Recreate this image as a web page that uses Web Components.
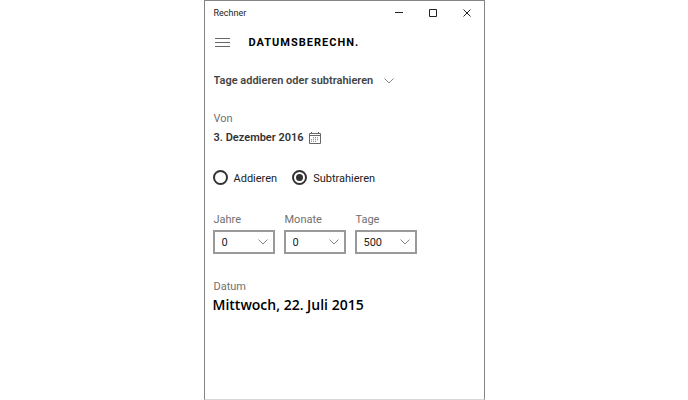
<!DOCTYPE html>
<html lang="de">
<head>
<meta charset="utf-8">
<meta name="viewport" content="width=device-width, initial-scale=1">
<title>Rechner</title>
<style>
    body{
        margin: 0;
        background-color: #fff;
        color: #2b2b2b;
        font: 11px/16px Roboto, "Open Sans", sans-serif;
    }
</style>
</head>
<body>
<app-window caption="Rechner">
    <nav-header>Datumsberechn.</nav-header>
    <mode-select></mode-select>
    <date-field label="Von">3. Dezember 2016</date-field>
    <operation-picker></operation-picker>
    <offset-row>
        <number-select label="Jahre" value="0"></number-select>
        <number-select label="Monate" value="0"></number-select>
        <number-select label="Tage" value="500"></number-select>
    </offset-row>
    <date-result label="Datum">Mittwoch, 22. Juli 2015</date-result>
</app-window>

<script>
const chevron = `
    <svg width="10" height="6" viewBox="0 0 10 6" fill="none" stroke="#888" aria-hidden="true">
        <path d="M.5.5 5 5 9.5.5"/>
    </svg>`;

class AppWindow extends HTMLElement {
    constructor(){
        super();
        this.attachShadow({mode:'open'});
    }

    connectedCallback(){
        this.shadowRoot.innerHTML=`
            <style>
                :host{
                    display: flex;
                    flex-direction: column;
                    box-sizing: border-box;
                    max-width: 281px;
                    min-height: 100vh;
                    margin: 0 auto;
                    border: 1px solid #858585;
                    border-bottom-color: #d8d8d8;
                    background-color: #fff;
                }

                header{
                    display: flex;
                    align-items: center;
                    height: 23px;
                    padding-left: 9px;
                    color: #222;
                    font-size: 9px;
                }

                .caption{
                    flex: 1;
                }

                button{
                    display: grid;
                    place-items: center;
                    width: 34px;
                    height: 23px;
                    padding: 0;
                    border: 0;
                    background: none;
                }

                main{
                    padding: 9px 8px;
                }
            </style>
            <header>
                <span class="caption">${this.getAttribute('caption')}</span>
                <button type="button" aria-label="Minimieren">
                    <svg width="8" height="8" fill="none" stroke="#222"><path d="M0 3.5h8"/></svg>
                </button>
                <button type="button" aria-label="Maximieren">
                    <svg width="8" height="8" fill="none" stroke="#222"><path d="M.5.5h7v7h-7z"/></svg>
                </button>
                <button type="button" aria-label="Schließen">
                    <svg width="8" height="8" fill="none" stroke="#222"><path d="m.5.5 7 7m0-7-7 7"/></svg>
                </button>
            </header>
            <main><slot></slot></main>`
        ;
    }
}

class NavHeader extends HTMLElement {
    constructor(){
        super();
        this.attachShadow({mode:'open'});

        this.shadowRoot.innerHTML=`
            <style>
                :host{
                    display: flex;
                    align-items: center;
                    gap: 18px;
                    margin-bottom: 20px;
                }

                button{
                    display: flex;
                    padding: 0 1px 0 2px;
                    border: 0;
                    background: none;
                }

                h1{
                    margin: 0;
                    color: #000;
                    font-size: 11px;
                    line-height: 20px;
                    font-weight: 700;
                    letter-spacing: 1px;
                    text-transform: uppercase;
                }
            </style>
            <button type="button" aria-label="Navigation öffnen">
                <svg width="15" height="10" fill="none" stroke="#666"><path d="M0 .5h15M0 4.5h15M0 8.5h15"/></svg>
            </button>
            <h1><slot></slot></h1>`
        ;
    }
}

class ModeSelect extends HTMLElement {
    constructor(){
        super();
        this.attachShadow({mode:'open'});

        this.shadowRoot.innerHTML=`
            <style>
                :host{
                    display: flex;
                    margin-bottom: 22px;
                    padding-left: 1px;
                }

                .box{
                    display: grid;
                    align-items: center;
                }

                select, svg{
                    grid-area: 1 / 1;
                }

                select{
                    appearance: none;
                    height: 16px;
                    margin: 0;
                    padding: 0 20px 0 0;
                    border: 0;
                    background: none;
                    color: #444;
                    font: inherit;
                    font-weight: 600;
                }

                svg{
                    justify-self: end;
                    pointer-events: none;
                }
            </style>
            <div class="box">
                <select aria-label="Berechnungsmodus">
                    <option>Tage addieren oder subtrahieren</option>
                </select>
                ${chevron}
            </div>`
        ;
    }
}

class DateField extends HTMLElement {
    constructor(){
        super();
        this.attachShadow({mode:'open'});
    }

    connectedCallback(){
        this.shadowRoot.innerHTML=`
            <style>
                :host{
                    display: block;
                    margin-bottom: 24px;
                    padding-left: 1px;
                }

                label{
                    display: block;
                    margin-bottom: 3px;
                    color: #707070;
                }

                button{
                    display: flex;
                    align-items: center;
                    gap: 5px;
                    padding: 0;
                    border: 0;
                    background: none;
                    color: #333;
                    font: inherit;
                    font-weight: 600;
                }
            </style>
            <label for="date">${this.getAttribute('label')}</label>
            <button id="date" type="button">
                <slot></slot>
                <svg width="12" height="12" fill="none" stroke="#666" aria-hidden="true">
                    <path d="M.5 1.5h11v10H.5zM.5 3.5h11M2.5 0v2M9.5 0v2"/>
                    <path stroke="#999" d="M4.5 5v5M6.5 5v5M8.5 5v4M2.5 7v3"/>
                    <path stroke="#fff" d="M2 6.5h8M2 8.5h8" stroke-opacity=".6"/>
                </svg>
            </button>`
        ;
    }
}

class OperationPicker extends HTMLElement {
    constructor(){
        super();
        this.attachShadow({mode:'open'});

        this.shadowRoot.innerHTML=`
            <style>
                :host{
                    display: flex;
                    gap: 15px;
                    margin-bottom: 25px;
                    color: #222;
                }

                label{
                    display: flex;
                    align-items: flex-start;
                    gap: 6px;
                    line-height: 17px;
                }

                input{
                    appearance: none;
                    display: grid;
                    place-items: center;
                    box-sizing: border-box;
                    width: 15px;
                    height: 15px;
                    margin: 0;
                    border: 2px solid #333;
                    border-radius: 50%;
                }

                input:checked::before{
                    width: 7px;
                    height: 7px;
                    border-radius: 50%;
                    background-color: #333;
                    content: '';
                }
            </style>
            <label><input type="radio" name="operation" value="add">Addieren</label>
            <label><input type="radio" name="operation" value="subtract" checked>Subtrahieren</label>`
        ;
    }
}

class OffsetRow extends HTMLElement {
    constructor(){
        super();
        this.attachShadow({mode:'open'});

        this.shadowRoot.innerHTML=`
            <style>
                :host{
                    display: flex;
                    flex-wrap: wrap;
                    gap: 9px;
                    margin-bottom: 25px;
                }
            </style>
            <slot></slot>`
        ;
    }
}

class NumberSelect extends HTMLElement {
    constructor(){
        super();
        this.attachShadow({mode:'open'});
    }

    connectedCallback(){
        this.shadowRoot.innerHTML=`
            <style>
                :host{
                    display: block;
                    width: 62px;
                }

                label{
                    display: block;
                    margin-bottom: 2px;
                    padding-left: 1px;
                    color: #707070;
                }

                .box{
                    display: grid;
                    align-items: center;
                }

                select, svg{
                    grid-area: 1 / 1;
                }

                select{
                    appearance: none;
                    box-sizing: border-box;
                    width: 100%;
                    height: 24px;
                    margin: 0;
                    padding: 1px 18px 0 7px;
                    border: 2px solid #999;
                    border-radius: 0;
                    background-color: #fff;
                    color: #222;
                    font: inherit;
                }

                svg{
                    justify-self: end;
                    margin-right: 7px;
                    pointer-events: none;
                }
            </style>
            <label for="number">${this.getAttribute('label')}</label>
            <div class="box">
                <select id="number"><option>${this.getAttribute('value')}</option></select>
                ${chevron}
            </div>`
        ;
    }
}

class DateResult extends HTMLElement {
    constructor(){
        super();
        this.attachShadow({mode:'open'});
    }

    connectedCallback(){
        this.shadowRoot.innerHTML=`
            <style>
                :host{
                    display: block;
                }

                label{
                    display: block;
                    padding-left: 1px;
                    color: #707070;
                }

                output{
                    display: block;
                    color: #000;
                    font: 600 14px/20px "Open Sans", sans-serif;
                }
            </style>
            <label for="result">${this.getAttribute('label')}</label>
            <output id="result"><slot></slot></output>`
        ;
    }
}

customElements.define('app-window', AppWindow);
customElements.define('nav-header', NavHeader);
customElements.define('mode-select', ModeSelect);
customElements.define('date-field', DateField);
customElements.define('operation-picker', OperationPicker);
customElements.define('offset-row', OffsetRow);
customElements.define('number-select', NumberSelect);
customElements.define('date-result', DateResult);
</script>
</body>
</html>
